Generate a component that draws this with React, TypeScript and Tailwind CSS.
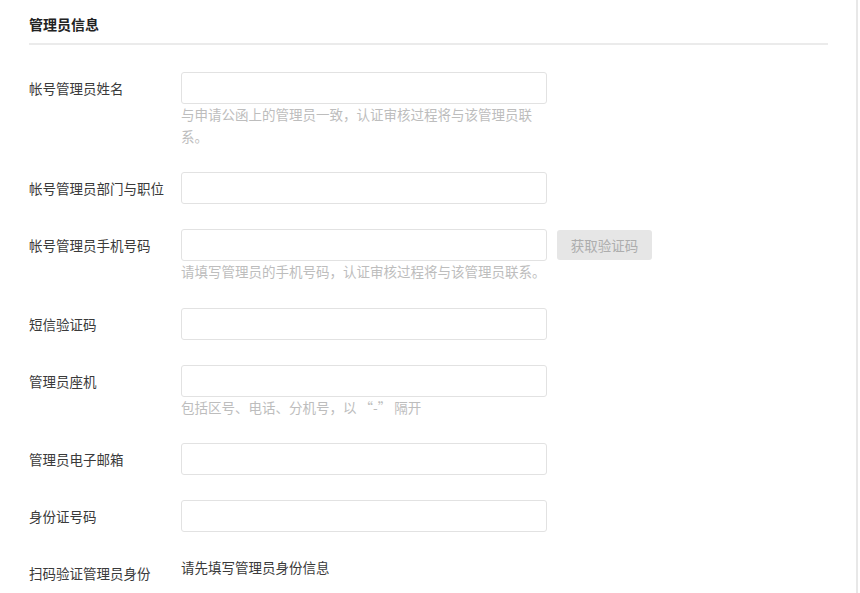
const font = { fontFamily: '"Noto Sans CJK SC", "Noto Sans", sans-serif' }

type Row = {
  label: string
  hint?: string
  hintClass?: string
  button?: string
}

const rows: Row[] = [
  {
    label: '帐号管理员姓名',
    hint: '与申请公函上的管理员一致，认证审核过程将与该管理员联系。',
    hintClass: 'w-[360px]',
  },
  { label: '帐号管理员部门与职位' },
  {
    label: '帐号管理员手机号码',
    hint: '请填写管理员的手机号码，认证审核过程将与该管理员联系。',
    hintClass: 'whitespace-nowrap',
    button: '获取验证码',
  },
  { label: '短信验证码' },
  { label: '管理员座机', hint: '包括区号、电话、分机号，以 “-” 隔开', hintClass: 'whitespace-nowrap' },
  { label: '管理员电子邮箱' },
  { label: '身份证号码' },
]

function FormRow({ row }: { row: Row }) {
  return (
    <div className="flex">
      <label className="w-[152px] shrink-0 pt-[6px] text-[13.5px] leading-[20px] text-[#3a3a3a]">{row.label}</label>
      <div className="flex flex-col">
        <div className="flex items-center gap-[10px]">
          <input
            type="text"
            className="h-[32px] w-[366px] rounded-[3px] border border-[#e2e2e2] bg-white px-2 text-[13.5px] outline-none"
          />
          {row.button && (
            <button
              disabled
              className="h-[30px] w-[95px] rounded-[3px] bg-[#e6e6e6] text-[13.5px] text-[#adadad]"
            >
              {row.button}
            </button>
          )}
        </div>
        {row.hint && (
          <p className={`text-[13.5px] leading-[21.5px] text-[#bdbdbd] ${row.hintClass ?? ''}`}>{row.hint}</p>
        )}
      </div>
    </div>
  )
}

export default function App() {
  return (
    <div className="h-[593px] w-[860px] overflow-hidden bg-white" style={font}>
      <div className="flex h-full w-[858px] border-r-2 border-[#e8e8e8]">
        <div className="w-[828px] pl-[29px]">
          {/* 标题 */}
          <div className="flex h-[43px] items-center pt-[5px] text-[14px] font-bold text-[#222]">管理员信息</div>
          <div className="h-[2px] bg-[#ebebeb]" />

          {/* 表单 */}
          <div className="mt-[27px] flex flex-col gap-[25px]">
            {rows.map((row) => (
              <FormRow key={row.label} row={row} />
            ))}
            <div className="flex">
              <label className="w-[152px] shrink-0 pt-[6px] text-[13.5px] leading-[20px] text-[#3a3a3a]">
                扫码验证管理员身份
              </label>
              <span className="text-[13.5px] leading-[20px] text-[#3a3a3a]">请先填写管理员身份信息</span>
            </div>
          </div>
        </div>
      </div>
    </div>
  )
}
